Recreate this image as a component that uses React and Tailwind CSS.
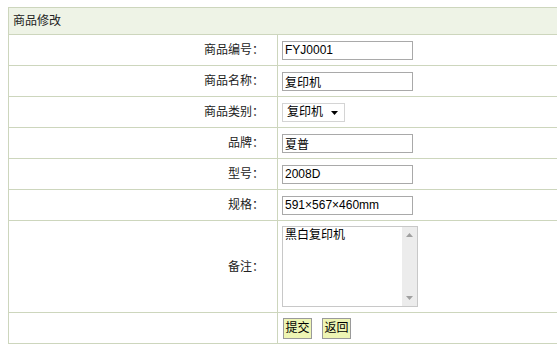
import React from 'react';

const cjk = { fontFamily: '"Liberation Sans", "Noto Sans CJK SC", sans-serif' };

const Row = ({ label, children, tall }) => (
  <>
    <div
      className={`flex items-center justify-end pr-[13px] border-b border-r border-[#cdd6bd] text-[12px] text-[#222] ${
        tall ? 'h-[92px]' : 'h-[31px]'
      }`}
    >
      {label}
    </div>
    <div
      className={`flex items-center pl-[4px] border-b border-[#cdd6bd] ${
        tall ? 'h-[92px]' : 'h-[31px]'
      }`}
    >
      {children}
    </div>
  </>
);

const TextInput = ({ value }) => (
  <input
    defaultValue={value}
    className="w-[131px] h-[19px] border border-[#a9a9a9] bg-white px-[2px] text-[12px] text-black outline-none"
    style={cjk}
  />
);

export default function App() {
  return (
    <div className="w-[557px] h-[354px] bg-white overflow-hidden" style={cjk}>
      <div className="ml-[8px] mt-[7px] w-[560px] border-t border-l border-[#cdd6bd]">
        {/* Header */}
        <div className="h-[27px] flex items-center pl-[4px] bg-[#eef3e6] border-b border-[#cdd6bd] text-[12px] text-[#222]">
          商品修改
        </div>

        {/* Form */}
        <div className="grid grid-cols-[269px_1fr]">
          <Row label="商品编号：">
            <TextInput value="FYJ0001" />
          </Row>
          <Row label="商品名称：">
            <TextInput value="复印机" />
          </Row>
          <Row label="商品类别：">
            <div className="relative w-[63px] h-[19px] border border-[#d4d4d4] bg-white flex items-center pl-[4px] text-[12px] text-black">
              复印机
              <svg className="absolute right-[6px] top-[7px]" width="7" height="4" viewBox="0 0 7 4">
                <path d="M0 0h7L3.5 4z" fill="#000" />
              </svg>
            </div>
          </Row>
          <Row label="品牌：">
            <TextInput value="夏普" />
          </Row>
          <Row label="型号：">
            <TextInput value="2008D" />
          </Row>
          <Row label="规格：">
            <TextInput value="591×567×460mm" />
          </Row>
          <Row label="备注：" tall>
            <div className="flex w-[136px] h-[81px] border border-[#c8c8c8] bg-white">
              <textarea
                defaultValue="黑白复印机"
                className="flex-1 resize-none overflow-hidden px-[2px] pt-[1px] text-[12px] leading-[15px] text-black outline-none"
                style={cjk}
              />
              <div className="w-[15px] bg-[#ececec] flex flex-col items-center justify-between py-[6px]">
                <svg width="7" height="4" viewBox="0 0 7 4">
                  <path d="M3.5 0L7 4H0z" fill="#a0a0a0" />
                </svg>
                <svg width="7" height="4" viewBox="0 0 7 4">
                  <path d="M0 0h7L3.5 4z" fill="#a0a0a0" />
                </svg>
              </div>
            </div>
          </Row>
          <Row label="">
            <div className="flex gap-[10px] pl-[1px]">
              <button className="h-[21px] w-[29px] border border-[#9a9a9a] bg-[#eef5b4] text-[12px] text-black" style={cjk}>
                提交
              </button>
              <button className="h-[21px] w-[29px] border border-[#9a9a9a] bg-[#eef5b4] text-[12px] text-black" style={cjk}>
                返回
              </button>
            </div>
          </Row>
        </div>
      </div>
    </div>
  );
}
